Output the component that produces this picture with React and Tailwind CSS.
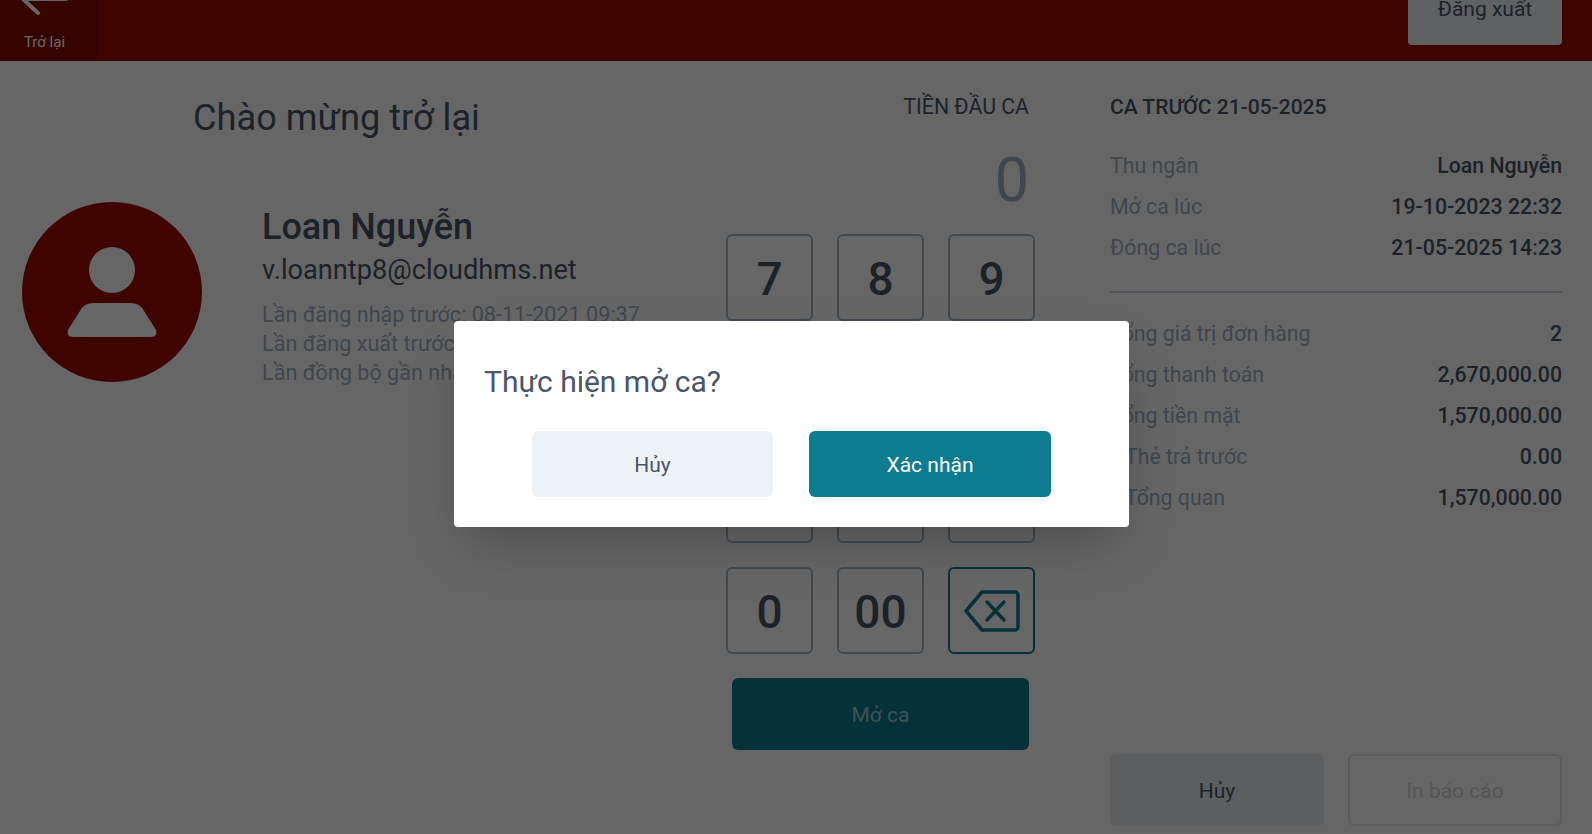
const font = { fontFamily: 'Roboto, "Noto Sans", sans-serif' };

const summaryTop = [
  ['Thu ngân', 'Loan Nguyễn'],
  ['Mở ca lúc', '19-10-2023 22:32'],
  ['Đóng ca lúc', '21-05-2025 14:23'],
];

const summaryBottom = [
  ['Tổng giá trị đơn hàng', '2'],
  ['Tổng thanh toán', '2,670,000.00'],
  ['Tổng tiền mặt', '1,570,000.00'],
  ['Thẻ trả trước', '0.00', true],
  ['Tổng quan', '1,570,000.00', true],
];

const keys = ['7', '8', '9', '4', '5', '6', '1', '2', '3', '0', '00'];

const SummaryRow = ({ label, value, indent }) => (
  <div className="flex h-[41px] items-center justify-between text-[21.3px]">
    <span className={indent ? 'pl-[15px] text-[#a0aec0]' : 'text-[#a0aec0]'}>{label}</span>
    <span className="font-medium text-[#4a5568]">{value}</span>
  </div>
);

const BackspaceIcon = () => (
  <svg width="56" height="42" viewBox="0 0 56 42" fill="none" stroke="#0e7c90" strokeWidth="3.5" strokeLinejoin="round" strokeLinecap="round">
    <path d="M18 2 H51 a3 3 0 0 1 3 3 V37 a3 3 0 0 1 -3 3 H18 L2 21 Z" />
    <path d="M23 12 L40 30 M40 12 L23 30" />
  </svg>
);

export default function App() {
  return (
    <div className="relative flex h-[834px] flex-col overflow-hidden bg-white" style={font}>
      <header className="flex h-[61px] shrink-0 items-start justify-between bg-[#a00c00]">
        <button className="flex h-[61px] w-[97px] flex-col bg-[#870a00] text-white">
          <svg className="mt-[-16px] ml-[16px]" width="60" height="40" viewBox="0 0 60 40" fill="none" stroke="#ffffff" strokeWidth="4" strokeLinecap="round">
            <path d="M7 15 H50 M7 15 L22 29" />
          </svg>
          <span className="mt-[9px] w-[89px] text-center text-[15px] leading-[18px]">Trở lại</span>
        </button>
        <button className="mt-[-26px] mr-[30px] flex h-[71px] w-[154px] items-center justify-center rounded-[4px] bg-[#edf2f7] text-[21px] text-[#4a5568]">
          Đăng xuất
        </button>
      </header>

      <main className="flex min-h-0 flex-1">
        <section className="w-[726px] shrink-0">
          <h1 className="mt-[35px] ml-[193px] text-[36.2px] leading-[44px] text-[#4a5568]">Chào mừng trở lại</h1>
          <div className="mt-[62px] ml-[22px] flex">
            <div className="flex h-[180px] w-[180px] shrink-0 items-center justify-center rounded-full bg-[#a00c00]">
              <svg width="92" height="92" viewBox="0 0 92 92" fill="#ffffff">
                <circle cx="46" cy="24" r="23" />
                <path d="M28 57 H64 Q74 57 78 65 L90 84 Q92 91 85 91 H7 Q0 91 2 84 L14 65 Q18 57 28 57 Z" />
              </svg>
            </div>
            <div className="ml-[60px] pt-[3px]">
              <div className="text-[36px] leading-[44px] font-medium text-[#4a5568]">Loan Nguyễn</div>
              <div className="mt-[3px] text-[27.2px] leading-[36px] text-[#4a5568]">v.loanntp8@cloudhms.net</div>
              <div className="mt-[12px] text-[21.6px] leading-[29px] text-[#a0aec0]">
                <div>Lần đăng nhập trước: 08-11-2021 09:37</div>
                <div>Lần đăng xuất trước: 08-11-2021 09:37</div>
                <div>Lần đồng bộ gần nhất: 08-11-2021 09:37</div>
              </div>
            </div>
          </div>
        </section>

        <section className="w-[308px] shrink-0">
          <div className="mt-[33px] mr-[5px] text-right text-[21.3px] leading-[26px] text-[#4a5568]">TIỀN ĐẦU CA</div>
          <div className="mt-[24px] mr-[5px] text-right text-[61px] leading-[72px] text-[#a0aec0]">0</div>
          <div className="mt-[18px] grid w-[308px] grid-cols-[87px_87px_87px] gap-[24px]">
            {keys.map((k) => (
              <button key={k} className="flex h-[87px] items-center justify-center rounded-[6px] border-2 border-[#a0b4c8] pt-[4px] text-[46px] font-medium text-[#4a5568]">
                {k}
              </button>
            ))}
            <button className="flex h-[87px] items-center justify-center rounded-[6px] border-2 border-[#0e7c90]">
              <BackspaceIcon />
            </button>
          </div>
          <button className="mt-[24px] ml-[6px] flex h-[72px] w-[297px] items-center justify-center rounded-[6px] bg-[#0e7c90] pt-[3px] text-[21px] text-white/60">
            Mở ca
          </button>
        </section>

        <section className="ml-[76px] w-[452px] shrink-0">
          <h2 className="mt-[33px] text-[21px] leading-[27px] font-medium text-[#4a5568]">CA TRƯỚC 21-05-2025</h2>
          <div className="mt-[24px]">
            {summaryTop.map(([label, value]) => (
              <SummaryRow key={label} label={label} value={value} />
            ))}
          </div>
          <div className="mt-[23px] mb-[20px] h-[2px] bg-[#cbd5e0]" />
          {summaryBottom.map(([label, value, indent]) => (
            <SummaryRow key={label} label={label} value={value} indent={indent} />
          ))}
          <div className="mt-[236px] flex justify-between">
            <button className="flex h-[72px] w-[214px] items-center justify-center rounded-[6px] bg-[#e8ecf1] pt-[3px] text-[21px] text-[#4a5568]">Hủy</button>
            <button className="flex h-[72px] w-[214px] items-center justify-center rounded-[6px] border-2 border-gray-200 pt-[3px] text-[21px] text-gray-300">In báo cáo</button>
          </div>
        </section>
      </main>

      <div className="absolute inset-0 flex items-start justify-center bg-black/60">
        <div className="mt-[321px] ml-[-9px] h-[206px] w-[675px] rounded-[4px] bg-white px-[30px] shadow-2xl">
          <div className="mt-[42px] text-[30px] leading-[38px] text-[#4a5568]">Thực hiện mở ca?</div>
          <div className="mt-[30px] ml-[48px] flex gap-[36px]">
            <button className="flex h-[66px] w-[241px] items-center justify-center rounded-[6px] bg-[#edf2f7] pt-[3px] text-[21px] text-[#4a5568]">Hủy</button>
            <button className="flex h-[66px] w-[242px] items-center justify-center rounded-[6px] bg-[#0e7c90] pt-[3px] text-[21px] text-white">Xác nhận</button>
          </div>
        </div>
      </div>
    </div>
  );
}
